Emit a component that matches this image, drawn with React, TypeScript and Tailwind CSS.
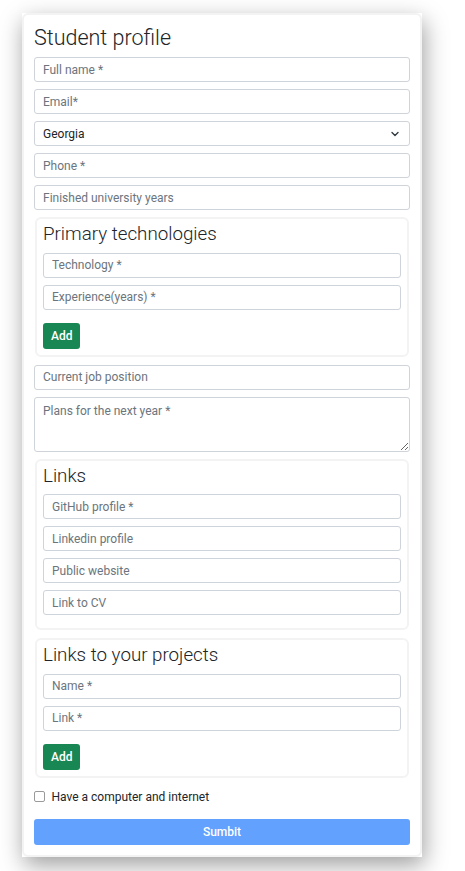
import React, { useState } from 'react';

const inputClass =
  'block w-full h-[25px] px-2 border border-[#ced4da] rounded-[3px] bg-white text-[12px] text-[#212529] placeholder:text-[#6c757d] outline-none';

const Field: React.FC<{ placeholder: string }> = ({ placeholder }) => (
  <input type="text" placeholder={placeholder} className={`${inputClass} mb-[7px]`} />
);

const Section: React.FC<{ title: string; children: React.ReactNode; className?: string }> = ({
  title,
  children,
  className,
}) => (
  <div className={`mx-px border-2 border-[#f3f3f3] rounded-[6px] px-[6px] pt-[4px] pb-[6px] ${className ?? ''}`}>
    <h4 className="text-[18.75px] font-light leading-[23.4px] text-[#212529] mb-[6px] font-['Roboto_Light','Roboto',sans-serif]">
      {title}
    </h4>
    {children}
  </div>
);

const AddButton = () => (
  <button
    type="button"
    className="mt-[6px] h-[26px] px-[8px] rounded-[3px] bg-[#198754] text-white text-[12px] font-medium"
  >
    Add
  </button>
);

export default function App() {
  const [country, setCountry] = useState('Georgia');
  const [hasComputer, setHasComputer] = useState(false);

  return (
    <div className="min-h-[871px] bg-white pt-[13px] pl-[22px] font-['Roboto',sans-serif]">
      <div className="w-[400px] bg-white shadow-[2px_8px_22px_rgba(0,0,0,0.38)]">
        <div className="border-2 border-[#f3f3f3] rounded-[6px] px-[10px] pt-[10px] pb-[10px]">
          <h3 className="text-[21.5px] font-light leading-[26.4px] text-[#212529] mb-[6px] font-['Roboto_Light','Roboto',sans-serif]">
            Student profile
          </h3>

          <Field placeholder="Full name *" />
          <Field placeholder="Email*" />
          <div className="relative mb-[7px]">
            <select
              value={country}
              onChange={(e) => setCountry(e.target.value)}
              className={`${inputClass} appearance-none`}
            >
              <option>Georgia</option>
              <option>Armenia</option>
              <option>Azerbaijan</option>
            </select>
            <svg
              className="absolute right-[11px] top-[10px] pointer-events-none"
              width="8"
              height="6"
              viewBox="0 0 8 6"
              fill="none"
              stroke="#343a40"
              strokeWidth="1.4"
              strokeLinecap="round"
              strokeLinejoin="round"
            >
              <path d="M1 1.5l3 3 3-3" />
            </svg>
          </div>
          <Field placeholder="Phone *" />
          <Field placeholder="Finished university years" />

          <Section title="Primary technologies">
            <Field placeholder="Technology *" />
            <Field placeholder="Experience(years) *" />
            <AddButton />
          </Section>

          <div className="mt-[8px]">
            <Field placeholder="Current job position" />
            <textarea
              placeholder="Plans for the next year *"
              className="block w-full h-[55px] px-2 py-[4px] border border-[#ced4da] rounded-[3px] text-[12px] text-[#212529] placeholder:text-[#6c757d] outline-none mb-[7px]"
            />
          </div>

          <Section title="Links">
            <Field placeholder="GitHub profile *" />
            <Field placeholder="Linkedin profile" />
            <Field placeholder="Public website" />
            <Field placeholder="Link to CV" />
          </Section>

          <Section title="Links to your projects" className="mt-[8px]">
            <Field placeholder="Name *" />
            <Field placeholder="Link *" />
            <AddButton />
          </Section>

          <label className="flex items-center gap-[7px] mt-[10px] h-[18px] text-[12px] text-[#212529]">
            <input
              type="checkbox"
              checked={hasComputer}
              onChange={(e) => setHasComputer(e.target.checked)}
              className="appearance-none w-[10.5px] h-[10.5px] m-0 border border-[#9a9a9a] rounded-[2px] bg-white checked:bg-[#0d6efd] checked:border-[#0d6efd]"
            />
            Have a computer and internet
          </label>

          <button
            type="button"
            disabled
            className="mt-[13.5px] block w-full h-[26px] rounded-[3px] bg-[#62a1fe] text-white text-[12px] font-medium"
          >
            Sumbit
          </button>
        </div>
      </div>
    </div>
  );
}
